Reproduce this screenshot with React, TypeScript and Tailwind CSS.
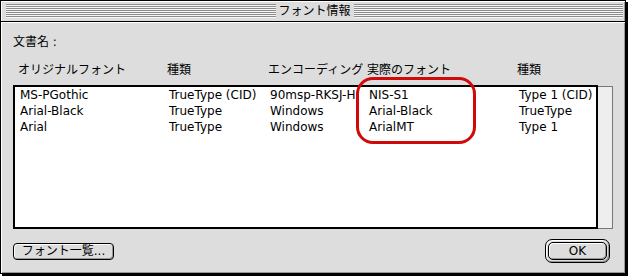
import React from "react";

const rows = [
  ["MS-PGothic", "TrueType (CID)", "90msp-RKSJ-H", "NIS-S1", "Type 1 (CID)"],
  ["Arial-Black", "TrueType", "Windows", "Arial-Black", "TrueType"],
  ["Arial", "TrueType", "Windows", "ArialMT", "Type 1"],
];

const headers = ["オリジナルフォント", "種類", "エンコーディング", "実際のフォント", "種類"];

function Stripes() {
  return (
    <div className="flex-1 flex flex-col">
      {[0, 1, 2, 3, 4, 5, 6].map((i) => (
        <div key={i} className="h-[2px] border-t border-[#8c8c8c] bg-[#f6f6f6]" />
      ))}
    </div>
  );
}

export default function App() {
  return (
    <div className="relative w-[629px] h-[276px] bg-white text-black text-[12px] leading-[14px] font-['DejaVu_Sans','Noto_Sans_CJK_JP',sans-serif]">
      <div className="w-[626px] h-[274px] border border-black shadow-[2px_2px_0_#000] flex flex-col bg-[#dddddd]">
        {/* title bar */}
        <div className="h-[21px] border-b border-black flex items-center pl-[5px] pr-[2px] gap-[3px] shadow-[inset_1px_1px_0_#ffffff,inset_-1px_0_0_#999999]">
          <Stripes />
          <div className="h-[14px] leading-[14px] whitespace-nowrap">フォント情報</div>
          <Stripes />
        </div>
        {/* body */}
        <div className="flex-1 flex flex-col pl-[12px] pr-[11px] pt-[13px] shadow-[inset_1px_1px_0_#ffffff,inset_-1px_-1px_0_#999999]">
          <div className="h-[14px]">文書名 :</div>
          <div className="mt-[14px] h-[14px] pl-[5px] grid grid-cols-[149px_101px_99px_150px_1fr] whitespace-nowrap">
            {headers.map((h, i) => (
              <div key={i}>{h}</div>
            ))}
          </div>
          <div className="mt-[8px] flex">
            <div className="w-[585px] h-[144px] border-2 border-black bg-white pl-[5px]">
              {rows.map((r, i) => (
                <div
                  key={i}
                  className="h-[16px] leading-[16px] grid grid-cols-[149px_101px_99px_150px_1fr] whitespace-nowrap"
                >
                  {r.map((c, j) => (
                    <div key={j}>{c}</div>
                  ))}
                </div>
              ))}
            </div>
            <div className="w-[15px] h-[143px] mt-px border-t border-r border-b border-[#777777] bg-[#eeeeee]" />
          </div>
          <div className="mt-[10px] h-[24px] pr-[4px] flex items-center justify-between">
            <div className="w-[101px] h-[17px] rounded-[4px] border border-black flex items-center justify-center shadow-[inset_1px_1px_0_#ffffff,inset_-1px_-1px_0_#999999] whitespace-nowrap">
              フォント一覧...
            </div>
            <div className="w-[65px] h-[24px] rounded-[7px] border border-black p-[2px] shadow-[inset_1px_1px_0_#ffffff,inset_-1px_-1px_0_#999999]">
              <div className="w-full h-full rounded-[5px] border border-black flex items-center justify-center shadow-[inset_1px_1px_0_#ffffff,inset_-1px_-1px_0_#999999]">
                OK
              </div>
            </div>
          </div>
        </div>
      </div>
      {/* red annotation */}
      <div className="absolute left-[356px] top-[77px] w-[120px] h-[67px] border-[3px] border-[#d00a0a] rounded-[17px]" />
    </div>
  );
}
